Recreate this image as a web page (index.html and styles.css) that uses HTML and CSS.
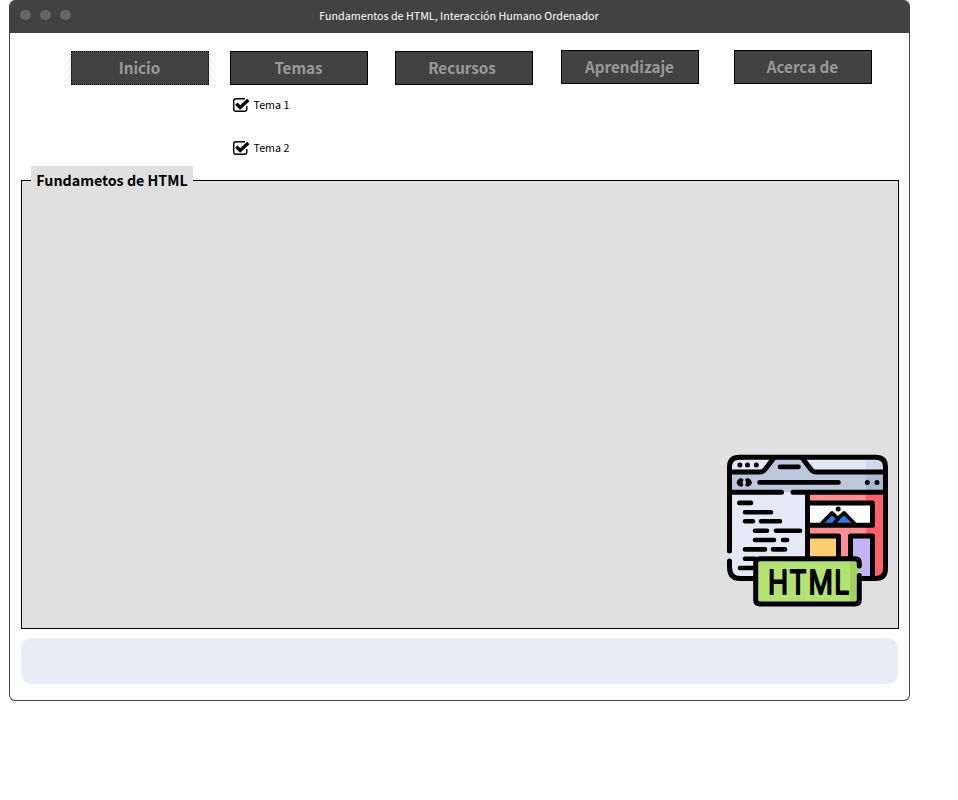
FILE: index.html
```html
<!DOCTYPE html>
<html lang="es">
<head>
<meta charset="utf-8">
<title>Fundamentos de HTML</title>
<link rel="stylesheet" href="styles.css">
</head>
<body>
<div class="window">
  <header class="titlebar">
    <div class="controls"><i></i><i></i><i></i></div>
    <h1>Fundamentos de HTML, Interacción Humano Ordenador</h1>
  </header>
  <nav class="menu">
    <button class="tab focused">Inicio</button>
    <button class="tab">Temas</button>
    <button class="tab shifted">Recursos</button>
    <button class="tab raised">Aprendizaje</button>
    <button class="tab raised">Acerca de</button>
  </nav>
  <ul class="topics">
    <li><svg class="check" viewBox="0 0 18 16"><path d="M13 1.700H4Q1.700 1.700 1.700 4V12Q1.700 14.300 4 14.300H12.500Q14.800 14.300 14.800 12V9" fill="none" stroke="#000" stroke-width="1.400"/><path d="M4.300 6.600 8.200 10.400 16.300 2.900" fill="none" stroke="#000" stroke-width="3.400"/></svg><span>Tema 1</span></li>
    <li><svg class="check" viewBox="0 0 18 16"><path d="M13 1.700H4Q1.700 1.700 1.700 4V12Q1.700 14.300 4 14.300H12.500Q14.800 14.300 14.800 12V9" fill="none" stroke="#000" stroke-width="1.400"/><path d="M4.300 6.600 8.200 10.400 16.300 2.900" fill="none" stroke="#000" stroke-width="3.400"/></svg><span>Tema 2</span></li>
  </ul>
  <section class="panel">
    <h2>Fundametos de HTML</h2>
    <svg class="html-icon" viewBox="726 454 163 153">
      <rect x="729" y="457" width="157" height="122" rx="10" fill="#e4e9f8"/>
      <path d="M866 457H877Q886 457 886 467V473H866Z" fill="#d0dbf0"/>
      <path d="M729 472H761Q764 472 766 469L772 461Q775 457 778 457H798Q801 457 804 461L810 469Q812 472 815 472H886V492H729Z" fill="#bdc8dc"/>
      <path d="M866 472H886V492H866Z" fill="#abb8d1"/>
      <path d="M808 492H886V569Q886 579 877 579H808Z" fill="#ff8e93"/>
      <path d="M866 492H886V569Q886 579 877 579H866Z" fill="#ff6168"/>
      <path d="M808 503H872.500V525H808Z" fill="#fff"/>
      <path d="M822 523 832 513 838 519 844 513 854 523Z" fill="#3478df"/>
      <path d="M808 536H838.500V559H808Z" fill="#ffcd73"/>
      <path d="M850.500 536H872.500V578H850.500Z" fill="#c3b3f7"/>
      <g class="outline">
        <path d="M729.500 551V467Q729.500 457.200 739.500 457.200H875.500Q885.500 457.200 885.500 467V568.500Q885.500 578.500 875.500 578.500H862M729.500 561V567Q729.500 578.500 740 578.500H754"/>
        <path d="M731 472H760Q763 472 765 469.500L773 459M803 459 811 469.500Q813 472 816 472H884"/>
        <path d="M731 492.200H781.500M793 492.200H884M807.500 493V557"/>
        <path d="M808 503H872.500V525.300H808M808 536H838.500V557M850.500 557V536H872.500V577"/>
      </g>
      <path class="peaks" d="M821.500 523.500 832 512.800 838 518.500 844 512.800 854.500 523.500M834 523.500 838.500 518.500"/>
      <g class="lines">
        <path d="M780 466.900H798.500M759.500 482.400H838.500"/>
        <path d="M739.300 502.900H751M745 512.300H771M745 521.300H753M761 521.300H780M755 530.800H767M776 530.800H800M755 540H774M783 540H787M745 549.400H765M773 549.400H785M745 558.700H755M740 568H754"/>
      </g>
      <g fill="#000">
        <circle cx="739.800" cy="465" r="2.500"/><circle cx="747.500" cy="465" r="2.500"/><circle cx="756.300" cy="465" r="2.500"/>
        <circle cx="867.300" cy="482.400" r="2.500"/><circle cx="877" cy="482.400" r="2.500"/><circle cx="838.200" cy="509" r="2.500"/>
        <path d="M736.500 482.400Q737 479.500 740 478.300Q743.500 477.800 743.300 480.500L742.500 482.400 743.300 484.500Q743.500 487.200 740 486.500Q737 485.300 736.500 482.400ZM752 482.400Q751.500 479.500 748.500 478.300Q745 477.800 745.300 480.500L746.200 482.400 745.300 484.500Q745 487.200 748.500 486.500Q751.500 485.300 752 482.400Z"/>
      </g>
      <rect x="755.500" y="558.700" width="104" height="45.300" rx="4" fill="#b3e273"/>
      <path d="M850 559H856Q859.500 559 859.500 563V600Q859.500 604 856 604H850Z" fill="#a3d063"/>
      <path class="outline" d="M859.300 566V563Q859.300 558.700 855 558.700H760Q755.700 558.700 755.700 563V599.500Q755.700 604 760 604H855Q859.300 604 859.300 599.500V575.500"/>
      <text class="label" transform="scale(.82 1)" y="594"><tspan x="936.500">H</tspan><tspan x="962.500">T</tspan><tspan x="986">M</tspan><tspan x="1017.500">L</tspan></text>
    </svg>
  </section>
  <footer class="footer"></footer>
</div>
</body>
</html>
```
FILE: styles.css
```css
* { box-sizing: border-box; }
body {
  margin: 0;
  background: #fff;
  color: #000;
  font-family: "Noto Sans CJK JP", "Noto Sans", sans-serif;
}
.window {
  width: 901px;
  height: 701px;
  margin-left: 9px;
  border: 1px solid #424242;
  border-top: 0;
  border-radius: 6px;
  overflow: hidden;
}
.titlebar {
  display: grid;
  grid-template-columns: 100px 1fr 100px;
  align-items: center;
  height: 33px;
  background: #424242;
}
.controls { display: flex; gap: 9.600px; padding: 0 0 2.600px 10.400px; }
.controls i { width: 10.400px; height: 10.400px; border-radius: 50%; background: #666; }
.titlebar h1 {
  margin: 0;
  color: #fff;
  font-size: 10.730px;
  font-weight: 400;
  line-height: 31px;
  padding: 0 1px 2px 0;
  text-align: center;
}
.menu {
  display: grid;
  grid-template-columns: 138px 144px 145px 152px 138px;
  column-gap: 21px;
  height: 52px;
  padding: 17px 0 0 61px;
}
.tab {
  width: 138px;
  height: 34px;
  margin: 1px 0 0;
  padding: 0 1px 2px 0;
  border: 1px solid #000;
  background: #424242;
  color: #999;
  font: bold 15.200px/30px "Noto Sans CJK JP", sans-serif;
}
.tab.focused { border-style: dotted; }
.tab.shifted { padding-right: 4px; }
.tab.raised { margin-top: 0; }
.topics {
  display: flex;
  flex-direction: column;
  gap: 27px;
  height: 95px;
  margin: 0;
  padding: 12px 0 0 222px;
  list-style: none;
  font-size: 10.730px;
}
.topics li { display: flex; align-items: center; gap: 3.500px; height: 16px; line-height: 16px; }
.check { width: 18px; height: 16px; }
.panel {
  display: flex;
  justify-content: space-between;
  align-items: flex-end;
  width: 878px;
  height: 449px;
  margin-left: 11px;
  padding: 0 9px 21px;
  border: 1px solid #000;
  background: #e0e0e0;
}
.panel h2 {
  align-self: flex-start;
  width: 162px;
  height: 30px;
  margin: -15px 0 0;
  background: #e0e0e0;
  font-size: 14.250px;
  line-height: 27px;
  text-align: center;
}
.html-icon { width: 163px; height: 153px; }
.outline, .lines, .peaks { fill: none; stroke: #000; stroke-linecap: round; stroke-linejoin: round; }
.outline { stroke-width: 5; }
.lines { stroke-width: 4.600; }
.peaks { stroke-width: 3.600; }
.label {
  font-family: Inter, sans-serif;
  font-size: 33px;
  stroke: #000;
  stroke-width: 1.800;
  stroke-linejoin: round;
}
.footer {
  width: 877px;
  height: 46px;
  margin: 9px 0 0 11px;
  border-radius: 10px;
  background: #eaecf8;
}
```
